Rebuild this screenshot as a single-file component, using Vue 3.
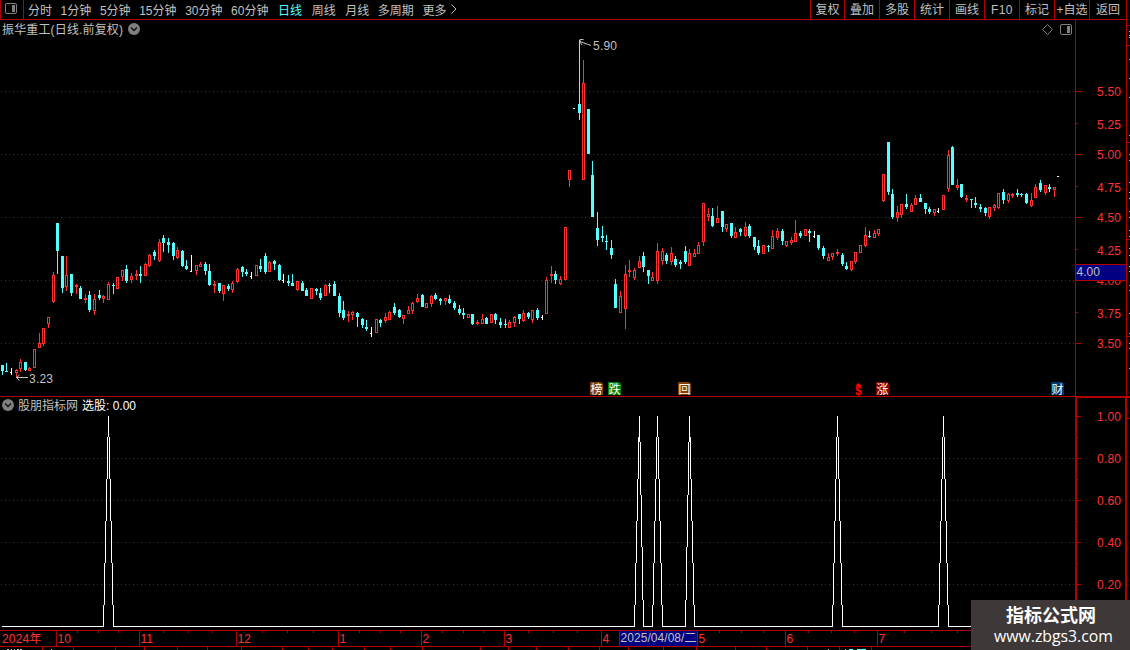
<template>
  <div class="terminal">
    <header class="toolbar">
      <div class="layout-toggle">
        <svg width="12" height="11" viewBox="0 0 12 11">
          <rect x="0.5" y="0.5" width="11" height="10" rx="1.5" fill="none" stroke="#808080" />
          <rect x="7" y="2" width="3" height="7" fill="#808080" />
        </svg>
      </div>
      <nav class="periods">
        <span
          v-for="period in periods"
          :key="period.name"
          :class="{ active: period.name === '日线', wide: period.wide }"
          >{{ period.name }}</span
        >
        <svg class="more" width="6" height="10" viewBox="0 0 6 10">
          <path d="M0.5 0.5 L5 5 L0.5 9.5" fill="none" stroke="#c0c0c0" />
        </svg>
      </nav>
      <div class="actions">
        <span v-for="action in actions" :key="action" :class="{ latin: action === 'F10' }">{{
          action
        }}</span>
      </div>
    </header>

    <section class="pane price-pane">
      <svg class="plot" width="1130" height="377" viewBox="0 20 1130 377">
        <g class="grid">
          <line v-for="y in priceGrid" :key="y" x1="1" x2="1075" :y1="y + 0.5" :y2="y + 0.5" />
        </g>
        <g shape-rendering="crispEdges">
          <g v-for="bar in bars" :key="bar.x" :fill="bar.color">
            <rect :x="bar.x" :y="bar.high" width="1" :height="bar.top - bar.high" />
            <rect :x="bar.x" :y="bar.bottom" width="1" :height="bar.low - bar.bottom" />
            <path :d="bar.body" fill-rule="evenodd" />
          </g>
        </g>

        <g fill="none" stroke="#c0c0c0">
          <path d="M580 41.5 L591 45.5 M583.5 39.5 H580 V42 L582 45" />
          <path d="M16 377.5 H28 M19.5 375 L16.5 377.5 L19.5 380.5" />
        </g>
        <text class="note" x="593" y="50" textLength="24">5.90</text>
        <text class="note" x="29" y="383" textLength="24">3.23</text>

        <g v-for="tag in tags" :key="tag.text">
          <path :d="`M${tag.x} 382 h11 l2 2 v11 h-13 z`" :fill="tag.color" />
          <text class="tag" :x="tag.x + 0.5" y="393.5">{{ tag.text }}</text>
        </g>
        <path d="M855 386 L858.5 383 L862 386 Z" fill="#ff0000" />
        <text class="dollar" x="855" y="395">$</text>

        <g class="frame">
          <rect x="1075" y="20" width="1" height="377" />
          <rect x="1126" y="20" width="1" height="377" />
          <rect x="0" y="396" width="1130" height="1" />
          <rect v-for="y in priceGrid" :key="y" x="1076" :y="y" width="5" height="1" />
          <rect v-for="y in [123, 186, 249, 312]" :key="y" x="1076" :y="y" width="2" height="1" />
          <rect v-for="y in [25, 45, 142, 239, 336]" :key="y" x="1127" :y="y" width="3" height="1" />
        </g>
        <rect v-for="y in sideMarks" :key="y" x="1129" :y="y" width="1" height="1" fill="#c0c0c0" />
        <text
          v-for="label in priceLabels"
          :key="label.text"
          class="scale"
          x="1097"
          :y="label.y"
          textLength="24"
          >{{ label.text }}</text
        >
        <g shape-rendering="crispEdges">
          <rect x="1075" y="264" width="51" height="17" fill="#b00000" />
          <rect x="1076" y="265" width="50" height="15" fill="#000080" />
        </g>
        <text class="note" x="1076.5" y="276" textLength="23.5">4.00</text>

        <path d="M1042.5 29.5 l5 -5 l5 5 l-5 5 z" fill="none" stroke="#808080" />
        <rect x="1060.5" y="24.5" width="11" height="10" rx="1.5" fill="none" stroke="#808080" />
        <rect x="1067" y="26" width="3" height="7" fill="#808080" />
      </svg>
      <div class="title">
        <span class="stock">振华重工(日线.前复权)</span>
        <svg width="12" height="12" viewBox="0 0 12 12">
          <circle cx="6" cy="6" r="6" fill="#808080" />
          <path d="M3 4.5 L6 7.5 L9 4.5" fill="none" stroke="#111" stroke-width="1.4" />
        </svg>
      </div>
    </section>

    <section class="pane signal-pane">
      <svg class="plot" width="1130" height="233" viewBox="0 397 1130 233">
        <g class="grid">
          <line v-for="y in signalGrid" :key="y" x1="1" x2="1075" :y1="y + 0.5" :y2="y + 0.5" />
        </g>
        <path :d="signalPath" fill="#fff" shape-rendering="crispEdges" />
        <g class="frame">
          <rect x="1075" y="397" width="2" height="233" />
          <rect x="1125" y="397" width="2" height="233" />
          <rect x="1075" y="397" width="55" height="1" />
          <rect x="1127" y="418" width="3" height="1" />
          <rect v-for="y in [416, ...signalGrid]" :key="y" x="1077" :y="y" width="4" height="1" />
          <rect v-for="y in [437, 479, 521, 563]" :key="y" x="1077" :y="y" width="1" height="1" />
        </g>
        <text
          v-for="label in signalLabels"
          :key="label.text"
          class="scale"
          x="1097"
          :y="label.y"
          textLength="24"
          >{{ label.text }}</text
        >
      </svg>
      <div class="title signal-title">
        <svg width="12" height="12" viewBox="0 0 12 12">
          <circle cx="6" cy="6" r="6" fill="#808080" />
          <path d="M3 4.5 L6 7.5 L9 4.5" fill="none" stroke="#111" stroke-width="1.4" />
        </svg>
        <span>股朋指标网</span>
        <span class="value">选股: 0.00</span>
      </div>
    </section>

    <footer class="pane time-pane">
      <svg class="plot" width="1130" height="20" viewBox="0 630 1130 20">
        <g class="frame">
          <rect x="0" y="630" width="1127" height="1" />
          <rect x="0" y="646" width="1127" height="1" />
          <rect v-for="month in months" :key="month.x" :x="month.x" y="631" width="1" height="15" />
          <rect v-for="x in weekTicks" :key="x" :x="x" y="631" width="1" height="2" />
          <rect v-for="x in lowerTicks" :key="x" :x="x" y="647" width="1" height="3" />
        </g>
        <text class="scale" x="2" y="643" textLength="39.5">2024年</text>
        <text
          v-for="month in months"
          :key="month.x"
          class="scale"
          :x="month.x + 1.5"
          y="643"
          >{{ month.text }}</text
        >
        <rect x="619" y="631" width="1" height="15" fill="#b00000" />
        <rect x="620" y="631" width="77" height="15" fill="#000080" />
        <text class="note" x="620.5" y="642" textLength="76">2025/04/08/二</text>
        <g fill="#c0c0c0">
          <rect v-for="x in fragments" :key="x" :x="x" y="649" width="1" height="1" />
        </g>
        <rect x="849" y="649" width="4" height="1" fill="#54ffff" />
        <rect x="857" y="649" width="9" height="1" fill="#54ffff" />
      </svg>
    </footer>

    <div class="watermark">
      <strong>指标公式网</strong>
      <span>www.zbgs3.com</span>
    </div>
  </div>
</template>

<script setup>
const periods = [
  { name: "分时" },
  { name: "1分钟" },
  { name: "5分钟" },
  { name: "15分钟" },
  { name: "30分钟" },
  { name: "60分钟" },
  { name: "日线", wide: true },
  { name: "周线", wide: true },
  { name: "月线", wide: true },
  { name: "多周期" },
  { name: "更多" },
];
const actions = ["复权", "叠加", "多股", "统计", "画线", "F10", "标记", "+自选", "返回"];

const priceGrid = [91, 154, 217, 280, 343];
const signalGrid = [458, 500, 542, 584];
const sideMarks = [
  31, 35, 37, 59, 78, 97, 135, 154, 160, 182, 192, 198, 211, 217, 230, 236, 248, 255, 266, 271, 285,
  290, 313, 333, 343, 348, 368,
];
const fragments = [7, 8, 11, 14, 17, 18, 20, 21, 51, 828, 845];

const priceLabels = [
  { text: "5.50", y: 96 },
  { text: "5.25", y: 129 },
  { text: "5.00", y: 159 },
  { text: "4.75", y: 192 },
  { text: "4.50", y: 222 },
  { text: "4.25", y: 255 },
  { text: "4.00", y: 285 },
  { text: "3.75", y: 318 },
  { text: "3.50", y: 348 },
];
const signalLabels = ["1.00", "0.80", "0.60", "0.40", "0.20"].map((text, i) => ({
  text,
  y: 421 + i * 42,
}));

const tags = [
  { text: "榜", x: 590, color: "#804000" },
  { text: "跌", x: 608, color: "#008000" },
  { text: "回", x: 678, color: "#804000" },
  { text: "涨", x: 876, color: "#800000" },
  { text: "财", x: 1051, color: "#003870" },
];

const months = [
  { text: "10", x: 56 },
  { text: "11", x: 139 },
  { text: "12", x: 236 },
  { text: "1", x: 338 },
  { text: "2", x: 421 },
  { text: "3", x: 504 },
  { text: "4", x: 601 },
  { text: "5", x: 697 },
  { text: "6", x: 785 },
  { text: "7", x: 877 },
];
const weekTicks = [
  77, 98, 118, 163, 188, 212, 262, 287, 313, 359, 380, 400, 442, 463, 483, 528, 553, 577, 719, 741,
  763, 808, 831, 854, 904, 931, 957,
];
const lowerTicks = [
  42, 73, 115, 144, 177, 207, 241, 282, 308, 332, 364, 390, 422, 480, 508, 536, 568, 599, 628, 663,
  696, 735, 766, 807, 839, 871,
];

// x, kind (u = up, d = down, n = flat), high, body top, body bottom, low
const rawBars = `
2 d 365 365 371 375|6 d 363 371 372 372|11 n 368 372 373 375|16 u 369 370 373 377
20 u 359 362 369 372|25 d 362 362 370 371|29 u 367 368 371 371|34 u 349 349 368 368
39 u 333 343 348 348|43 u 328 328 344 346|48 u 317 317 324 328|53 u 272 275 302 303
57 d 223 223 251 274|62 d 256 256 288 293|66 u 256 275 287 291|71 d 274 274 293 296
76 u 284 285 287 294|80 d 286 288 299 299|85 u 294 298 300 303|89 d 291 295 310 312
94 u 294 299 311 315|99 d 290 295 298 300|103 u 295 296 299 303|108 u 282 284 300 300
113 d 283 285 286 294|117 u 277 277 289 289|122 u 270 270 277 281|126 d 265 269 281 283
131 u 273 276 280 283|136 u 270 274 276 280|140 d 266 274 276 283|145 u 263 264 276 276
149 u 254 255 266 267|154 d 250 252 256 260|159 u 239 242 261 262|163 d 235 238 243 252
168 d 238 242 245 253|173 d 242 243 256 260|177 u 247 250 258 259|182 d 250 251 266 267
186 d 260 266 269 270|191 n 255 271 272 272|196 u 265 265 271 275|200 u 262 264 267 267
205 d 262 264 271 275|209 d 264 271 285 286|214 u 281 284 286 293|219 d 283 283 291 293
223 u 285 285 294 301|228 d 284 286 289 291|232 u 281 283 290 293|237 u 268 269 282 283
242 d 266 267 272 277|246 d 269 272 274 276|251 n 272 276 277 279|256 u 265 265 276 276
260 d 259 266 269 272|265 d 253 256 272 274|269 u 261 262 272 272|274 d 260 261 264 270
279 d 264 265 280 281|283 n 274 280 281 283|288 d 275 281 283 286|292 d 274 283 286 286
297 u 281 281 290 291|302 d 281 283 291 291|306 d 288 290 296 296|311 u 288 288 299 299
316 d 288 289 291 295|320 d 288 293 298 300|325 u 284 285 296 296|329 d 283 285 286 293
334 d 281 284 296 296|339 d 293 296 313 317|343 d 301 310 318 320|348 u 311 314 316 322
352 u 311 312 315 320|357 d 312 313 317 327|362 d 318 319 325 328|366 d 320 327 329 331
371 n 327 333 334 337|376 u 319 319 333 333|380 d 319 320 323 327|385 u 313 317 321 323
389 u 311 312 320 320|394 d 303 307 313 315|399 d 309 310 317 318|403 u 315 315 319 324
408 u 306 310 314 314|412 u 302 303 311 314|417 u 294 298 302 303|422 d 294 295 307 307
426 u 303 303 308 308|431 u 295 296 304 307|435 d 293 295 299 300|440 d 298 299 301 305
445 u 298 298 301 305|449 d 295 299 303 304|454 d 301 303 308 310|459 d 305 309 313 315
463 d 308 313 315 319|468 u 314 314 318 318|472 d 314 314 324 325|477 u 320 322 324 325
482 u 314 319 324 324|486 d 317 318 324 324|491 u 314 314 323 323|495 d 313 314 320 324
500 d 318 322 325 328|505 d 319 324 325 328|509 u 320 322 328 328|514 u 316 317 323 327
519 d 314 314 319 324|523 u 310 313 321 322|528 d 312 313 317 319|532 u 310 310 320 323
537 d 308 310 318 320|542 n 315 317 318 320|546 u 277 280 314 314|551 u 266 274 276 283
555 d 271 274 280 284|560 u 276 279 284 285|565 u 227 227 280 280|569 u 170 170 180 187
574 n 108 108 109 109|579 d 40 104 113 120|583 u 60 83 180 180|588 d 109 109 154 154
592 d 161 175 217 217|597 d 212 228 240 246|602 d 226 236 238 242|606 d 235 241 242 250
611 d 240 248 255 259|615 d 279 284 308 308|620 u 291 296 313 313|625 u 265 274 309 329
629 u 260 270 272 277|634 u 268 270 278 280|639 u 256 261 268 268|643 d 252 256 267 272
648 d 270 270 276 284|652 u 272 277 281 281|657 u 243 251 281 284|662 u 248 251 261 265
666 d 253 255 261 264|671 u 247 253 262 265|675 d 256 259 265 267|680 d 260 262 264 269
685 d 246 251 262 264|689 u 249 253 266 266|694 u 249 253 257 257|698 u 242 245 254 254
703 u 203 203 242 246|708 u 208 214 217 221|712 d 208 216 226 227|717 u 206 218 223 223
722 d 211 211 227 232|726 u 224 224 229 232|731 d 223 223 236 238|735 u 227 232 238 238
740 d 228 229 232 236|745 u 222 227 236 237|749 d 224 226 236 238|754 d 237 237 247 250
758 d 240 246 253 255|763 u 245 245 254 254|768 d 245 246 247 252|772 u 230 236 249 249
777 u 228 231 238 240|782 d 229 231 241 245|786 u 241 241 246 247|791 u 237 240 243 245
795 u 220 233 242 242|800 d 231 233 236 238|805 u 229 229 236 236|809 d 229 231 233 242
814 n 231 236 237 238|818 d 235 235 248 250|823 d 246 248 256 259|828 u 253 257 261 261
832 u 253 253 257 260|837 u 249 252 254 256|842 d 253 255 264 266|846 d 262 266 269 270
851 u 261 261 270 271|855 u 252 252 262 264|860 u 245 245 253 253|865 u 227 235 246 247
869 d 231 236 237 238|874 u 230 233 238 238|878 u 229 229 234 236|883 u 174 174 201 202
888 d 142 142 192 195|892 d 189 194 217 219|897 u 206 212 218 222|901 u 204 204 215 218
906 d 194 204 207 209|911 u 203 205 212 212|915 u 195 198 205 205|920 d 194 198 202 202
925 d 203 203 209 214|929 d 207 209 212 214|934 u 209 209 213 216|938 n 208 211 212 213
943 u 195 195 210 210|948 u 150 155 189 192|952 d 146 147 185 185|957 u 179 185 188 190
961 d 184 184 197 198|966 u 195 198 200 202|971 d 199 199 200 208|975 d 197 203 205 208
980 d 204 207 209 212|985 d 207 208 213 216|989 u 207 207 217 219|994 u 204 205 208 211
998 u 193 193 208 209|1003 d 189 192 200 204|1008 u 193 194 201 203|1012 u 193 194 196 198
1017 d 189 193 195 197|1021 d 193 194 195 197|1026 d 193 194 203 204|1031 u 193 200 206 207
1035 u 184 187 198 198|1040 d 180 183 190 192|1045 u 185 185 193 195|1049 d 184 187 189 192
1054 u 187 187 190 197|1058 n 176 176 177 177`;

const colors = { u: "#ff3232", d: "#54ffff", n: "#ffffff" };

const bars = rawBars
  .trim()
  .split(/[|\n]/)
  .map((row) => {
    const [px, kind, ...levels] = row.split(" ");
    const x = Number(px);
    const [high, top, bottom, low] = levels.map(Number);
    const height = bottom - top;
    const width = kind === "n" ? 2 : 3;
    let body = `M${x - 1} ${top}h${width}v${height}h${-width}z`;
    // rising bars are hollow
    if (kind === "u" && height > 2) {
      body += `M${x} ${top + 1}h1v${height - 2}h-1z`;
    }
    return { x, high, top, bottom, low, body, color: colors[kind] };
  });

// left foot, peak, right foot
const spikes = [
  [103, 108, 113],
  [634, 639, 643],
  [652, 657, 662],
  [685, 689, 694],
  [832, 837, 842],
  [938, 943, 948],
];

// one vertical run per pixel column, from the peak down to the foot
function spikeSide(peak, foot) {
  const steps = Math.abs(foot - peak);
  const dir = Math.sign(foot - peak);
  let d = "";
  for (let k = 0; k <= steps; k++) {
    const from = Math.round(416 + Math.max(0, ((k - 0.5) * 210) / steps));
    const to = Math.round(Math.min(627, 416 + ((k + 0.5) * 210) / steps));
    d += `M${peak + k * dir} ${from}h1V${to}h-1z`;
  }
  return d;
}

let signalPath = "";
let start = 2;
for (const [left, peak, right] of spikes) {
  signalPath += `M${start} 626H${left + 1}v1H${start}z`;
  signalPath += spikeSide(peak, left) + spikeSide(peak, right);
  start = right;
}
signalPath += `M${start} 626H1075v1H${start}z`;
</script>

<style>
body {
  margin: 0;
  background: #000;
}
</style>

<style scoped>
.terminal {
  position: relative;
  display: flex;
  flex-direction: column;
  width: 1130px;
  height: 650px;
  overflow: hidden;
  background: #000;
  color: #c0c0c0;
  font-family: "Liberation Sans", "Noto Sans CJK SC", sans-serif;
  font-size: 12px;
  line-height: 19px;
  white-space: nowrap;
}

.toolbar {
  box-sizing: border-box;
  display: flex;
  width: 1127px;
  height: 20px;
  flex-shrink: 0;
  border-bottom: 1px solid #b00000;
  border-right: 1px solid #b00000;
}

.layout-toggle {
  box-sizing: border-box;
  width: 24px;
  padding: 3px 0 0 4px;
  border-left: 1px solid #b00000;
  border-right: 1px solid #b00000;
  line-height: 0;
}

.periods {
  display: flex;
  height: 19px;
  gap: 8.6px;
  padding-left: 4px;
}

.periods span {
  padding-top: 1px;
  line-height: 18px;
  height: 18px;
  margin-top: 0.5px;
}

.periods .active {
  color: #54ffff;
}

.periods .wide {
  margin-left: 1px;
}

.more {
  margin: 4px 0 0 -4px;
}

.actions {
  display: grid;
  grid-template-columns: 34px repeat(7, 35px) 37px;
  height: 19px;
  margin-left: auto;
}

.actions span {
  display: flex;
  justify-content: center;
  box-sizing: border-box;
  height: 19px;
  padding-top: 1px;
  border-left: 1px solid #b00000;
}

.actions .latin {
  letter-spacing: 0.4px;
}

.pane {
  position: relative;
  flex-shrink: 0;
}

.price-pane {
  height: 377px;
}

.signal-pane {
  height: 233px;
}

.time-pane {
  height: 20px;
}

.plot {
  display: block;
}

.title {
  position: absolute;
  top: 0;
  left: 2px;
  display: flex;
  align-items: center;
  gap: 5px;
}

.title span {
  padding-top: 1px;
}

.title svg {
  margin-top: -2px;
}

.title .stock {
  letter-spacing: 0.15px;
}

.signal-title {
  top: -1px;
  gap: 4px;
}

.signal-title .value {
  color: #fff;
}

.grid line {
  stroke: #b00000;
  stroke-dasharray: 1 3;
}

.frame {
  fill: #b00000;
  shape-rendering: crispEdges;
}

.scale {
  fill: #ff3232;
}

.note {
  fill: #c0c0c0;
}

.tag {
  fill: #fff;
}

.dollar {
  fill: #ff0000;
  font-weight: bold;
}

.watermark {
  position: absolute;
  right: 0;
  bottom: 0;
  display: flex;
  flex-direction: column;
  align-items: center;
  box-sizing: border-box;
  width: 159px;
  height: 50px;
  padding: 3px 0 0 6px;
  background: #3e3838;
  color: #fff;
}

.watermark strong {
  margin-right: 5px;
  font: bold 18px/23px "Noto Sans CJK SC", sans-serif;
}

.watermark span {
  font: 15.8px/20px "Open Sans", sans-serif;
}
</style>
